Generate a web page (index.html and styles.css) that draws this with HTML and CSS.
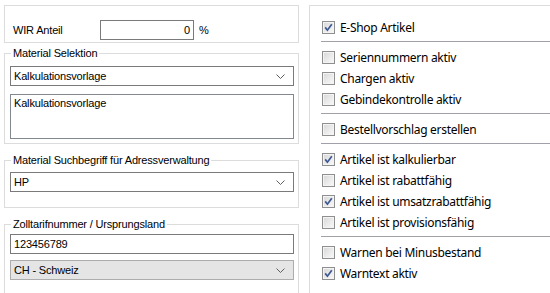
FILE: index.html
```html
<!DOCTYPE html>
<html lang="de">
<head>
    <meta charset="UTF-8">
    <title>Artikel Einstellungen</title>
    <link rel="stylesheet" href="styles.css">
</head>
<body>
    <div class="page">
        <div class="left">
            <div class="box wir">
                <span class="wir-label">WIR Anteil</span>
                <div class="field num">0</div>
                <span class="pct">%</span>
            </div>

            <fieldset class="group group-sel">
                <legend>Material Selektion</legend>
                <div class="combo">
                    <span>Kalkulationsvorlage</span>
                    <svg class="arrow" width="9" height="5" viewBox="0 0 9 5"><polyline points="0.5,0.5 4.5,4.5 8.5,0.5" fill="none" stroke="#606060" stroke-width="1"/></svg>
                </div>
                <div class="memo">Kalkulationsvorlage</div>
            </fieldset>

            <fieldset class="group group-such">
                <legend>Material Suchbegriff für Adressverwaltung</legend>
                <div class="combo">
                    <span>HP</span>
                    <svg class="arrow" width="9" height="5" viewBox="0 0 9 5"><polyline points="0.5,0.5 4.5,4.5 8.5,0.5" fill="none" stroke="#606060" stroke-width="1"/></svg>
                </div>
            </fieldset>

            <fieldset class="group group-zoll">
                <legend>Zolltarifnummer / Ursprungsland</legend>
                <div class="field">123456789</div>
                <div class="combo combo-ro">
                    <span>CH - Schweiz</span>
                    <svg class="arrow" width="9" height="5" viewBox="0 0 9 5"><polyline points="0.5,0.5 4.5,4.5 8.5,0.5" fill="none" stroke="#606060" stroke-width="1"/></svg>
                </div>
            </fieldset>
        </div>

        <div class="box right">
            <div class="row"><span class="cb"><svg width="11" height="11" viewBox="0 0 11 11"><path d="M2.2 5.4 L4.4 8.2 L8.8 2.2" fill="none" stroke="#3d5893" stroke-width="1.7"/></svg></span>E-Shop Artikel</div>
            <div class="sep"></div>
            <div class="row"><span class="cb"></span>Seriennummern aktiv</div>
            <div class="row"><span class="cb"></span>Chargen aktiv</div>
            <div class="row"><span class="cb"></span>Gebindekontrolle aktiv</div>
            <div class="sep"></div>
            <div class="row"><span class="cb"></span>Bestellvorschlag erstellen</div>
            <div class="sep"></div>
            <div class="row"><span class="cb"><svg width="11" height="11" viewBox="0 0 11 11"><path d="M2.2 5.4 L4.4 8.2 L8.8 2.2" fill="none" stroke="#3d5893" stroke-width="1.7"/></svg></span>Artikel ist kalkulierbar</div>
            <div class="row"><span class="cb"></span>Artikel ist rabattfähig</div>
            <div class="row"><span class="cb"><svg width="11" height="11" viewBox="0 0 11 11"><path d="M2.2 5.4 L4.4 8.2 L8.8 2.2" fill="none" stroke="#3d5893" stroke-width="1.7"/></svg></span>Artikel ist umsatzrabattfähig</div>
            <div class="row"><span class="cb"></span>Artikel ist provisionsfähig</div>
            <div class="sep"></div>
            <div class="row"><span class="cb"></span>Warnen bei Minusbestand</div>
            <div class="row"><span class="cb"><svg width="11" height="11" viewBox="0 0 11 11"><path d="M2.2 5.4 L4.4 8.2 L8.8 2.2" fill="none" stroke="#3d5893" stroke-width="1.7"/></svg></span>Warntext aktiv</div>
        </div>
    </div>
</body>
</html>
```

FILE: styles.css
```css
*,
*::before,
*::after {
    box-sizing: border-box;
}

html,
body {
    margin: 0;
    height: 100%;
    overflow: hidden;
    background: #ffffff;
}

body {
    font-family: "Liberation Sans", Arial, sans-serif;
    font-size: 11px;
    letter-spacing: -0.17px;
    color: #000000;
}

.page {
    display: flex;
    gap: 10px;
    padding: 5px 0 0 4px;
    height: 100%;
}

.left {
    display: flex;
    flex-direction: column;
    width: 295px;
    flex: none;
}

.box {
    border: 1px solid #dcdcdc;
}

/* WIR Anteil */
.wir {
    display: flex;
    align-items: center;
    height: 38px;
    padding: 14px 0 2px 8px;
}

.wir-label {
    width: 87px;
}

.field {
    height: 20px;
    border: 1px solid #7a7a7a;
    line-height: 18px;
    padding: 0 3px;
    background: #ffffff;
}

.num {
    width: 94px;
    text-align: right;
}

.pct {
    margin-left: 5px;
}

/* group boxes */
.group {
    margin: 10px 0 0;
    padding: 0 4px 0 5px;
    border: 1px solid #dcdcdc;
    min-width: 0;
}

.group legend {
    font-size: 11px;
    line-height: 13px;
    padding: 0 2px;
    margin-left: 1px;
}

.group-sel {
    margin-top: 4px;
    padding-top: 6px;
    padding-bottom: 4px;
}

.group-such {
    padding-top: 5px;
    padding-bottom: 15px;
}

.group-zoll {
    flex: 1;
    padding-top: 3px;
    border-bottom: none;
}

.combo {
    display: flex;
    align-items: center;
    justify-content: space-between;
    height: 20px;
    border: 1px solid #7a7a7a;
    padding: 0 8px 0 3px;
    background: #ffffff;
}

.combo-ro {
    margin-top: 6px;
    background: #e5e5e5;
    border-color: #adadad;
}

.arrow {
    display: block;
}

.memo {
    margin-top: 8px;
    height: 45px;
    border: 1px solid #828790;
    padding: 2px 3px;
    line-height: 13px;
}

/* checkbox panel */
.right {
    width: 260px;
    flex: none;
    border-right: none;
    border-bottom: none;
    padding: 11px 0 0 11px;
    font-family: "Noto Sans", "Open Sans", sans-serif;
    font-size: 12px;
    letter-spacing: -0.3px;
}

.row {
    display: flex;
    align-items: center;
    height: 21px;
    padding-left: 1px;
    white-space: nowrap;
}

.cb {
    width: 13px;
    height: 13px;
    margin-right: 5px;
    flex: none;
    border: 1px solid #8e8f8f;
    background: linear-gradient(135deg, #d6d6d6 0%, #ebebeb 55%, #f9f9f9 100%);
    box-shadow: inset 0 0 0 1px #f4f4f4;
}

.cb svg {
    display: block;
}

.sep {
    height: 1px;
    margin: 3px 0 5px;
    background: #a0a0a8;
}
```
